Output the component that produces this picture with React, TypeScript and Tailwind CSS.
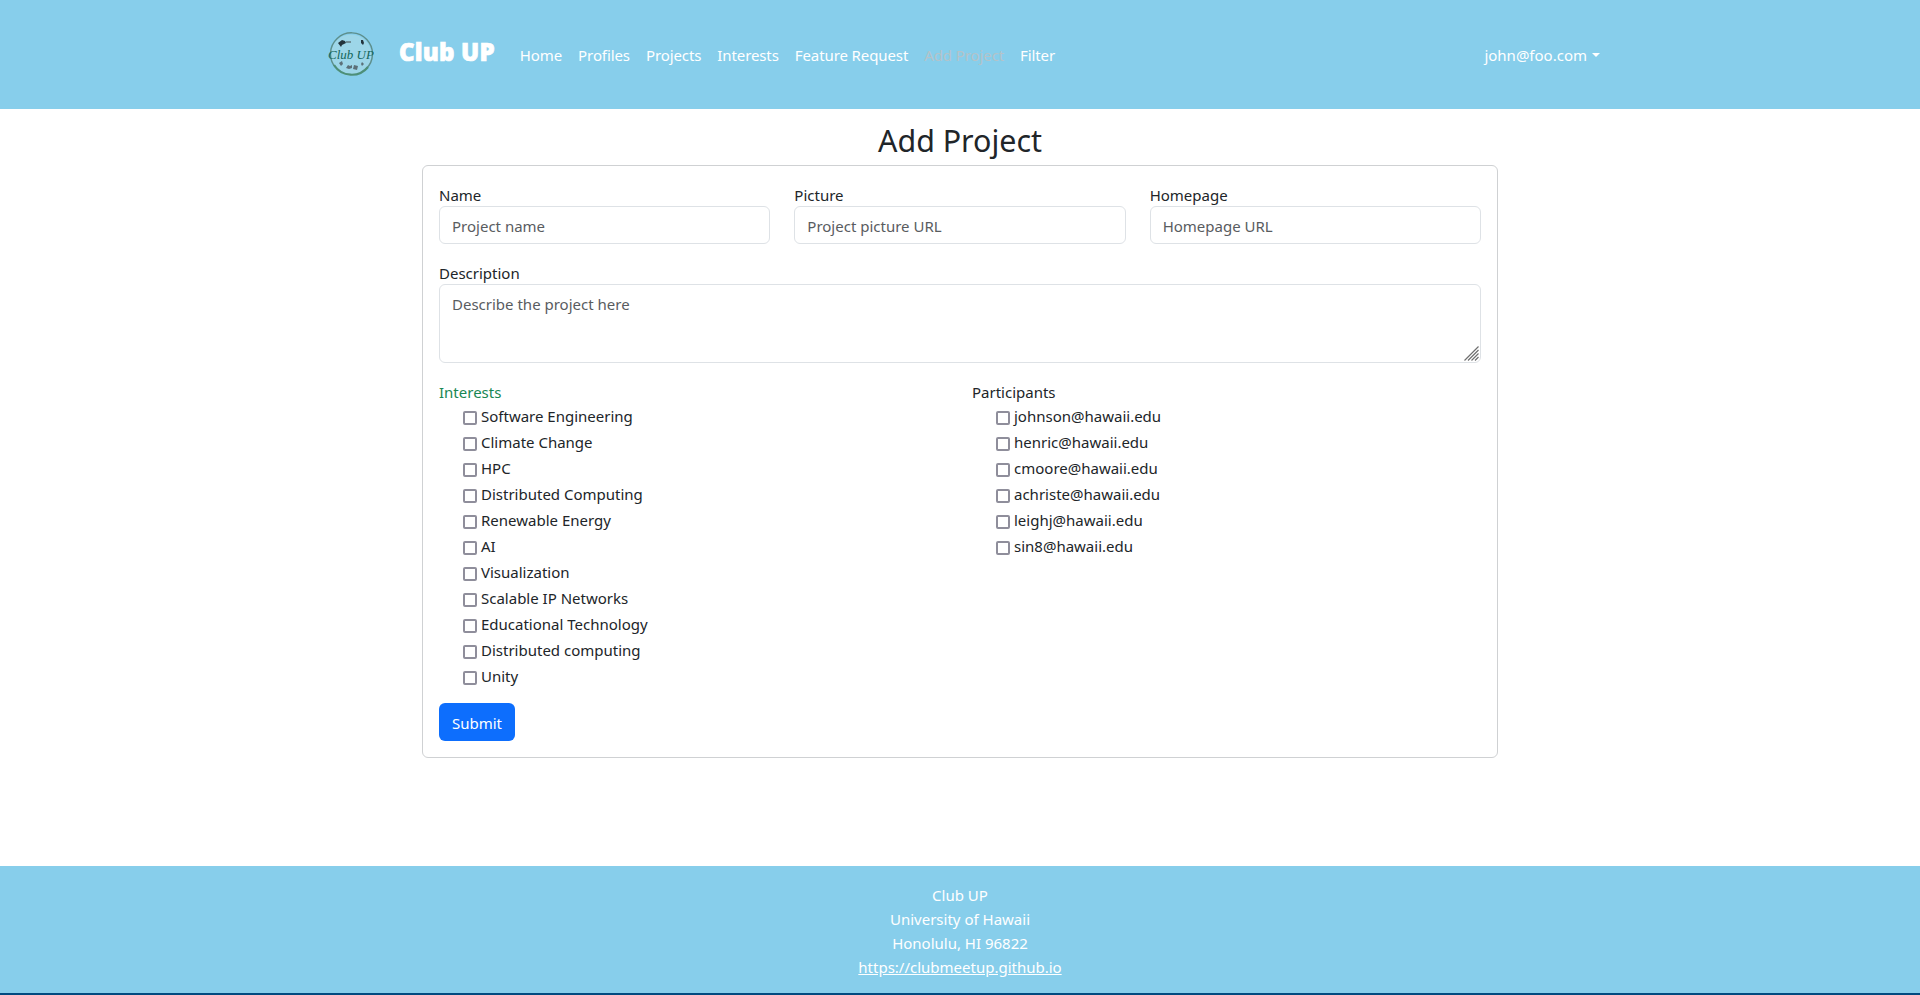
const navLinks = ['Home', 'Profiles', 'Projects', 'Interests', 'Feature Request', 'Add Project', 'Filter'];
const interests = [
  'Software Engineering',
  'Climate Change',
  'HPC',
  'Distributed Computing',
  'Renewable Energy',
  'AI',
  'Visualization',
  'Scalable IP Networks',
  'Educational Technology',
  'Distributed computing',
  'Unity',
];
const participants = [
  'johnson@hawaii.edu',
  'henric@hawaii.edu',
  'cmoore@hawaii.edu',
  'achriste@hawaii.edu',
  'leighj@hawaii.edu',
  'sin8@hawaii.edu',
];

function Logo() {
  return (
    <svg width="46" height="46" viewBox="0 0 46 46" className="shrink-0">
      <circle cx="23" cy="23" r="20.5" fill="#9dd6e8" />
      <path d="M8 36A21 21 0 1 1 38 37" fill="none" stroke="#5d8f8c" strokeWidth="1.4" />
      <path d="M6 33A21 21 0 0 0 40 35" fill="none" stroke="#4d8f78" strokeWidth="2.2" />
      <path d="M10 11l4-3 3 1 1 2-4 2-1 2zM33 8l2 0 1 3-1 2-2-2z" fill="#24343c" />
      <path d="M18 9h5v2h-5z" fill="#6f8f98" />
      <text x="23" y="26.5" textAnchor="middle" fontSize="13" fontStyle="italic" fill="#14665c" fontFamily="Liberation Serif, serif">
        Club UP
      </text>
      <path d="M11 31l3-2 1 3-2 2zM18 36l2-3 2 1 2-1 0 3-3 1zM26 33l4 1-1 4-4-1zM34 30l2 2-2 2-1-2z" fill="#5c7078" />
    </svg>
  );
}

function Field({ label, placeholder }: { label: string; placeholder: string }) {
  return (
    <div className="flex-1">
      <label className="block h-6 pt-px leading-6 text-[#212529]">{label}</label>
      <input
        type="text"
        placeholder={placeholder}
        className="block h-[38px] w-full rounded-md border border-[#dee2e6] bg-white px-3 pt-[2px] text-[15px] outline-none placeholder:text-[#595c5f]"
      />
    </div>
  );
}

function CheckList({ title, items, titleClass }: { title: string; items: string[]; titleClass: string }) {
  return (
    <div className="flex-1">
      <div className={`h-6 leading-6 ${titleClass}`}>{title}</div>
      <div className="pl-6">
        {items.map((item) => (
          <label key={item} className="flex h-[26px] items-center text-[#212529]">
            <input
              type="checkbox"
              className="m-0 mr-[4px] mt-[2px] h-[14px] w-[14px] shrink-0 appearance-none rounded-[2px] border-2 border-[#8f8e9b] bg-white"
            />
            <span className="mb-[2px]">{item}</span>
          </label>
        ))}
      </div>
    </div>
  );
}

export default function App() {
  return (
    <div className="flex min-h-[995px] flex-col bg-white font-['Noto_Sans',sans-serif] text-[15px] text-[#212529]">
      {/* Navbar */}
      <nav className="h-[109px] bg-[#87ceeb]">
        <div className="mx-auto flex h-full w-[1320px] items-center pl-[28px] pr-[20px]">
          <Logo />
          <span className="ml-[25px] mr-[25px] -mt-[6px] text-2xl font-black tracking-[0.2px] text-white [-webkit-text-stroke:0.7px_white]">
            Club UP
          </span>
          <ul className="flex gap-4 pt-[1px] tracking-[-0.1px]">
            {navLinks.map((link) => (
              <li key={link} className={link === 'Add Project' ? 'text-[#b4c3c9]' : 'text-white'}>
                {link}
              </li>
            ))}
          </ul>
          <div className="ml-auto flex items-center pt-px text-white">
            john@foo.com
            <span className="ml-[5px] h-0 w-0 border-x-[4.8px] border-t-[4.8px] border-x-transparent border-t-white" />
          </div>
        </div>
      </nav>

      {/* Form */}
      <main className="flex-1">
        <h2 className="mt-2 h-[48px] text-center text-[30.4px] leading-[48px] text-[#212529]">Add Project</h2>
        <div className="mx-auto w-[1076px] rounded-md border border-[#cfd1d3] p-4">
          <div className="flex gap-6">
            <Field label="Name" placeholder="Project name" />
            <Field label="Picture" placeholder="Project picture URL" />
            <Field label="Homepage" placeholder="Homepage URL" />
          </div>
          <div className="mt-4">
            <label className="block h-6 pt-px leading-6">Description</label>
            <div className="relative">
              <textarea
                placeholder="Describe the project here"
                className="block h-[79px] w-full resize-none rounded-md border border-[#dee2e6] px-3 pb-[6px] pt-[7px] text-[15px] leading-6 outline-none placeholder:text-[#595c5f]"
              />
              {/* resize grip */}
              <svg width="15" height="15" viewBox="0 0 15 15" className="absolute bottom-[2px] right-[2px]">
                <path d="M0.5 14.5L14.5 0.5M4 14.5L14.5 4M7.5 14.5L14.5 7.5M11 14.5L14.5 11" stroke="#6f6f6f" strokeWidth="1.2" />
              </svg>
            </div>
          </div>
          <div className="mt-[17px] flex gap-6">
            <CheckList title="Interests" items={interests} titleClass="text-[#198754]" />
            <CheckList title="Participants" items={participants} titleClass="text-[#212529]" />
          </div>
          <button className="mt-[13px] block h-[38px] w-[76px] rounded-md bg-[#0d6efd] pt-[3px] text-white">Submit</button>
        </div>
      </main>

      {/* Footer */}
      <footer className="h-[129px] border-b-2 border-[#014a7f] bg-[#87ceeb] pb-4 pt-[17px] text-center leading-6 text-white">
        <div>Club UP</div>
        <div>University of Hawaii</div>
        <div>Honolulu, HI 96822</div>
        <a className="underline">https://clubmeetup.github.io</a>
      </footer>
    </div>
  );
}
